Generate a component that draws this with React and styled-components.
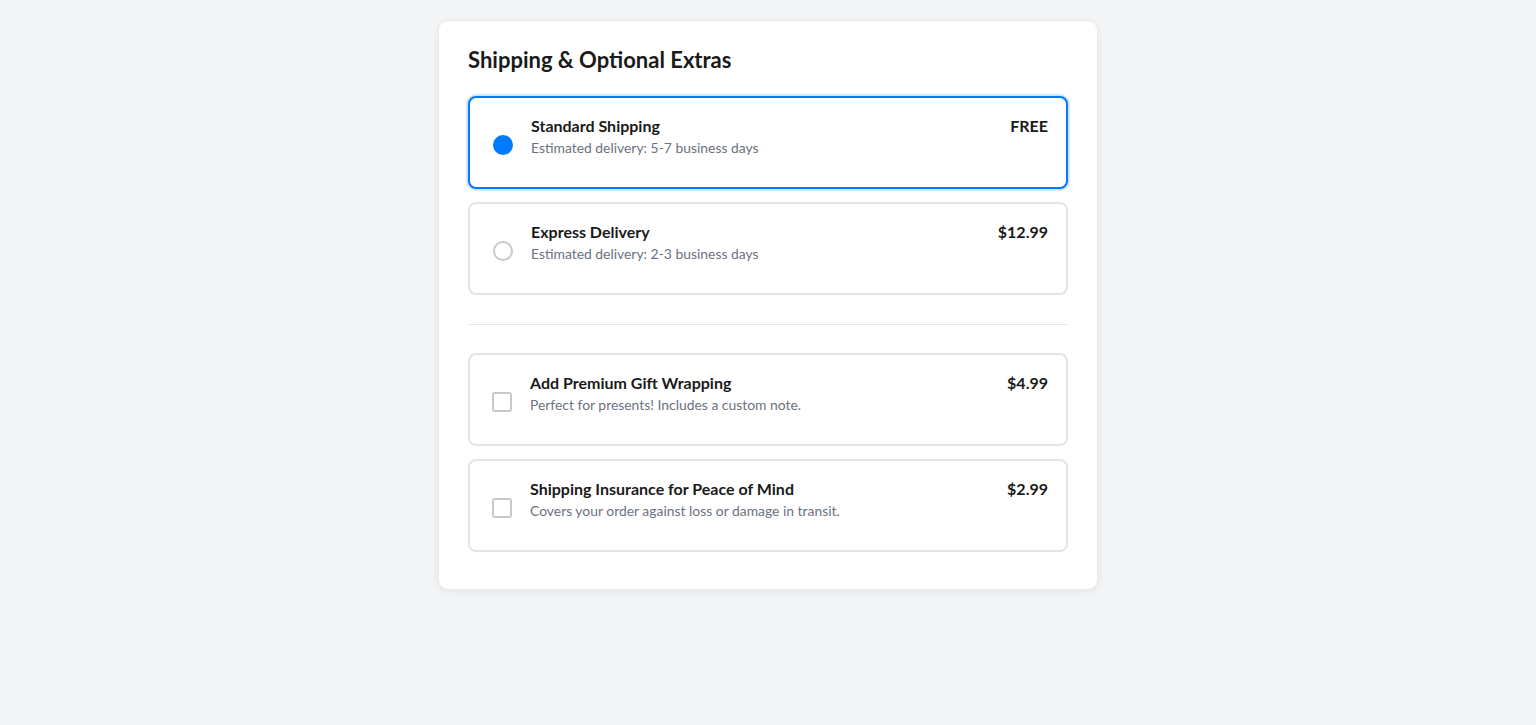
import React, { useState } from 'react';
import styled, { createGlobalStyle, css } from 'styled-components';

const GlobalStyle = createGlobalStyle`
  html, body {
    margin: 0;
    padding: 0;
    background: #f3f4f6;
    font-family: Lato, 'Open Sans', Arial, sans-serif;
    color: #1a1a1a;
  }
  * {
    box-sizing: border-box;
  }
`;

const shippingOptions = [
  { id: 'standard', title: 'Standard Shipping', desc: 'Estimated delivery: 5-7 business days', price: 'FREE' },
  { id: 'express', title: 'Express Delivery', desc: 'Estimated delivery: 2-3 business days', price: '$12.99' },
];

const extras = [
  { id: 'gift', title: 'Add Premium Gift Wrapping', desc: 'Perfect for presents! Includes a custom note.', price: '$4.99' },
  { id: 'insurance', title: 'Shipping Insurance for Peace of Mind', desc: 'Covers your order against loss or damage in transit.', price: '$2.99' },
];

const App = () => {
  const [shipping, setShipping] = useState('standard');
  const [selectedExtras, setSelectedExtras] = useState({});

  const toggleExtra = (id) =>
    setSelectedExtras((prev) => ({ ...prev, [id]: !prev[id] }));

  return (
    <>
      <GlobalStyle />
      <Page>
        <Card>
          <Heading>Shipping &amp; Optional Extras</Heading>
          <OptionList>
            {shippingOptions.map((opt) => {
              const active = shipping === opt.id;
              return (
                <Option key={opt.id} $active={active} onClick={() => setShipping(opt.id)}>
                  <Radio $checked={active} />
                  <Info>
                    <OptionTitle>{opt.title}</OptionTitle>
                    <OptionDesc>{opt.desc}</OptionDesc>
                  </Info>
                  <Price>{opt.price}</Price>
                </Option>
              );
            })}
          </OptionList>
          <Divider />
          <OptionList>
            {extras.map((opt) => {
              const active = !!selectedExtras[opt.id];
              return (
                <Option key={opt.id} $active={active} $shift onClick={() => toggleExtra(opt.id)}>
                  <Checkbox $checked={active} />
                  <Info>
                    <OptionTitle>{opt.title}</OptionTitle>
                    <OptionDesc>{opt.desc}</OptionDesc>
                  </Info>
                  <Price>{opt.price}</Price>
                </Option>
              );
            })}
          </OptionList>
        </Card>
      </Page>
    </>
  );
};

const Page = styled.div`
  min-height: 725px;
  padding-top: 20px;
  display: flex;
  justify-content: center;
  align-items: flex-start;
`;

const Card = styled.section`
  width: 660px;
  background: #ffffff;
  border: 1px solid #e8e9ec;
  border-radius: 10px;
  box-shadow: 0 2px 8px rgba(0, 0, 0, 0.06);
  padding: 26px 29px 37px;
`;

const Heading = styled.h2`
  margin: 0 0 23px;
  font-size: 22px;
  line-height: 26px;
  font-weight: 700;
  color: #1a1a1a;
`;

const OptionList = styled.div`
  display: flex;
  flex-direction: column;
  gap: 13px;
`;

const Option = styled.label`
  display: flex;
  align-items: flex-start;
  min-height: 93px;
  padding: 16px 18px 16px ${(p) => (p.$shift ? '22px' : '23px')};
  border: 2px solid #e3e5e8;
  border-radius: 8px;
  background: #fff;
  cursor: pointer;
  ${(p) =>
    p.$active &&
    css`
      border-color: #007bff;
      box-shadow: 0 0 0 2px rgba(0, 123, 255, 0.18);
    `}
`;

const Radio = styled.span`
  flex: none;
  width: 20px;
  height: 20px;
  margin-top: 21px;
  border-radius: 50%;
  border: 2px solid ${(p) => (p.$checked ? '#007bff' : '#c9c9c9')};
  background: ${(p) => (p.$checked ? '#007bff' : '#fff')};
`;

const Checkbox = styled.span`
  flex: none;
  width: 20px;
  height: 20px;
  margin-top: 21px;
  border-radius: 3px;
  border: 2px solid ${(p) => (p.$checked ? '#007bff' : '#c9c9c9')};
  background: ${(p) => (p.$checked ? '#007bff' : '#fff')};
`;

const Info = styled.div`
  flex: 1;
  margin-left: 18px;
`;

const OptionTitle = styled.div`
  font-size: 16px;
  line-height: 24px;
  font-weight: 700;
  color: #1a1a1a;
`;

const OptionDesc = styled.div`
  font-size: 13.9px;
  line-height: 20px;
  color: #6b7280;
`;

const Price = styled.div`
  font-size: 16px;
  line-height: 24px;
  font-weight: 700;
  color: #1a1a1a;
`;

const Divider = styled.hr`
  border: none;
  border-top: 1px solid #e5e7eb;
  margin: 29px 0 28px;
`;

export default App;
